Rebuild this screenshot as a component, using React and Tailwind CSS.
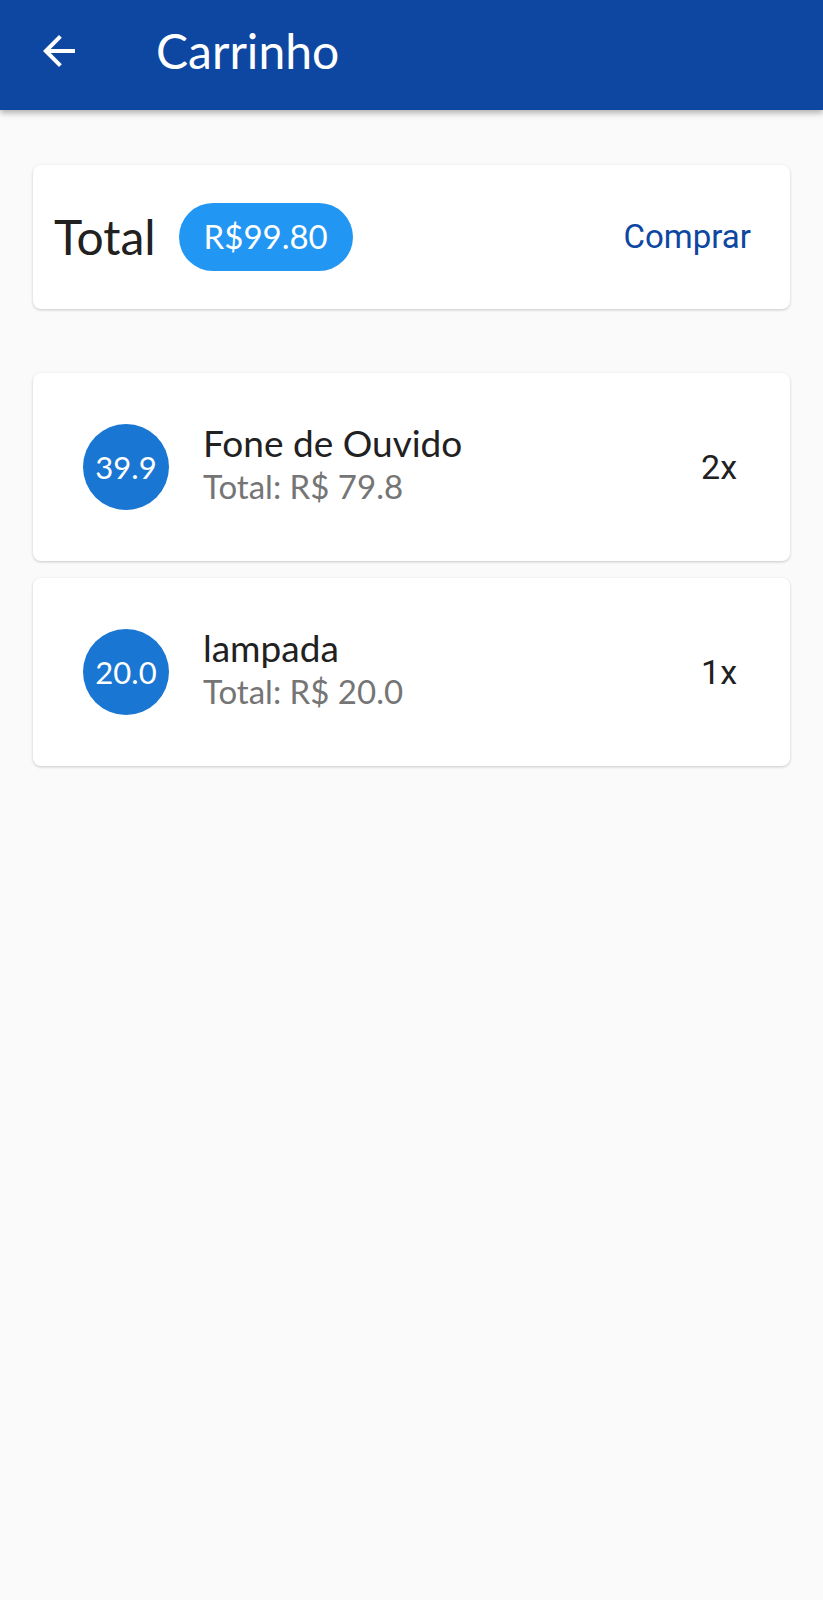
import React from "react";

const items = [
  { name: "Fone de Ouvido", price: "39.9", total: "79.8", qty: 2 },
  { name: "lampada", price: "20.0", total: "20.0", qty: 1 },
];

const ArrowBack = () => (
  <svg viewBox="0 0 24 24" className="w-12 h-12" fill="white">
    <path d="M20 11H7.83l5.59-5.59L12 4l-8 8 8 8 1.41-1.41L7.83 13H20v-2z" />
  </svg>
);

const CartItem = ({ item }) => (
  <div className="h-[188px] bg-white rounded-lg shadow-[0_1px_3px_rgba(0,0,0,0.2)] flex items-center pl-[50px] pr-[53px]">
    <div className="w-[86px] h-[86px] rounded-full bg-[#1976d2] flex items-center justify-center text-white text-[31px] font-['Lato',sans-serif]">
      {item.price}
    </div>
    <div className="flex flex-col ml-[34px] pb-[8px] flex-1 font-['Lato',sans-serif]">
      <span className="text-[37px] leading-[45px] text-[#212121]">{item.name}</span>
      <span className="text-[33px] leading-[42px] text-[#757575]">
        Total: R$ {item.total}
      </span>
    </div>
    <span className="text-[34px] text-[#212121] font-['Roboto',sans-serif]">
      {item.qty}x
    </span>
  </div>
);

export default function App() {
  return (
    <div className="min-h-[1600px] bg-[#fafafa]">
      <header className="h-[110px] bg-[#0d47a1] shadow-[0_3px_6px_rgba(0,0,0,0.3)] flex items-center pb-2 pl-[35px]">
        <ArrowBack />
        <h1 className="ml-[73px] text-white text-[48px] leading-none font-['Lato',sans-serif]">
          Carrinho
        </h1>
      </header>

      <main className="px-[33px] pt-[55px]">
        <div className="h-[144px] bg-white rounded-lg shadow-[0_1px_3px_rgba(0,0,0,0.2)] flex items-center pl-[21px] pr-[39px]">
          <span className="text-[48px] text-[#212121] font-['Lato',sans-serif]">Total</span>
          <span className="ml-[23px] w-[174px] h-[68px] rounded-full bg-[#2196f3] text-white text-[33px] flex items-center justify-center font-['Lato',sans-serif]">
            R$99.80
          </span>
          <button className="ml-auto text-[33px] text-[#0d47a1] font-['Roboto',sans-serif]">
            Comprar
          </button>
        </div>

        <div className="flex flex-col gap-[17px] mt-[64px]">
          {items.map((item) => (
            <CartItem key={item.name} item={item} />
          ))}
        </div>
      </main>
    </div>
  );
}
